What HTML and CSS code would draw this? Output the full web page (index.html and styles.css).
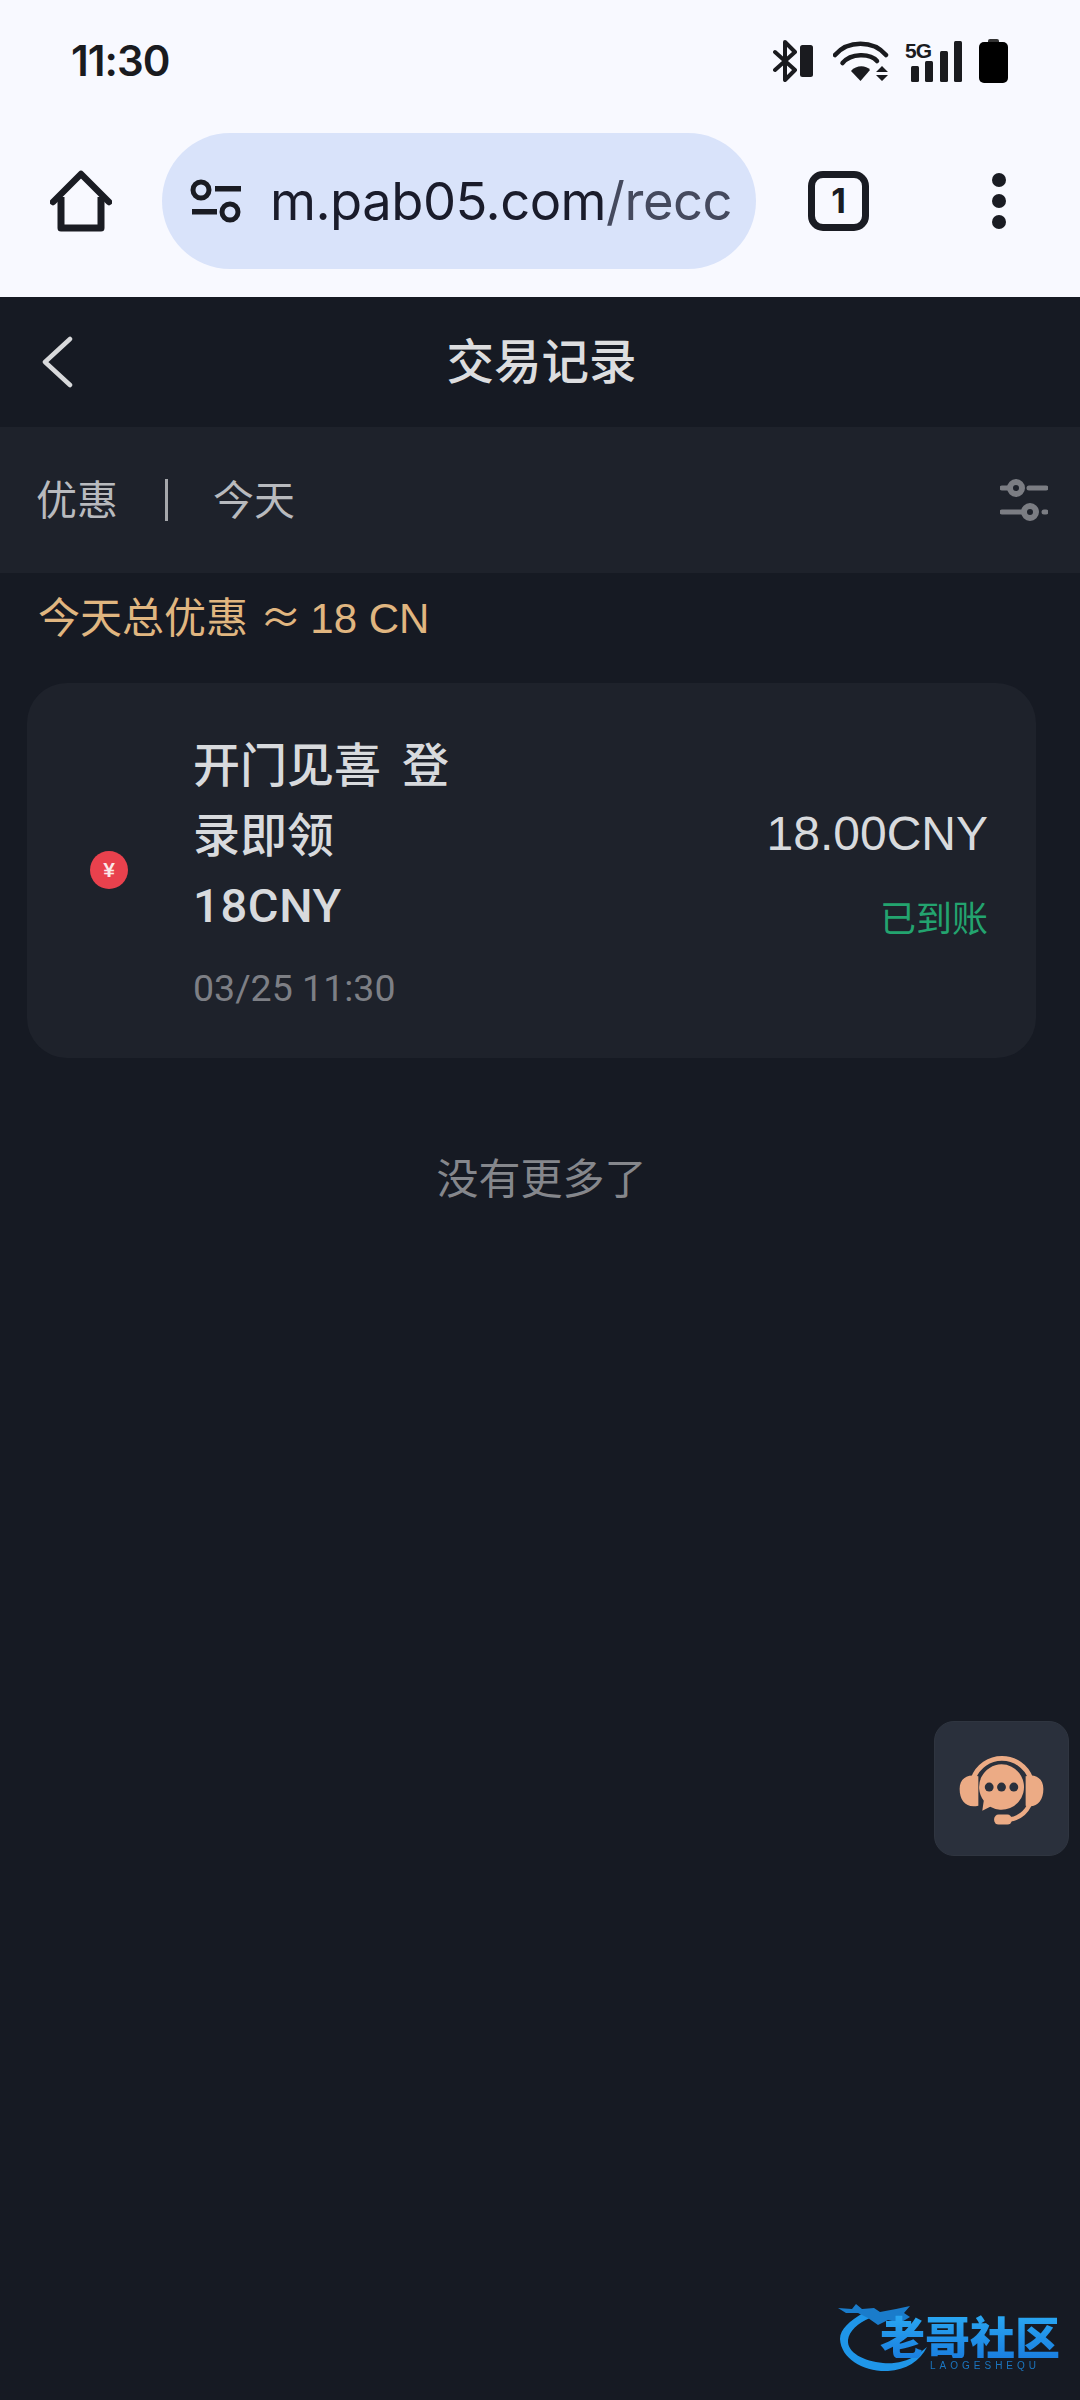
FILE: index.html
```html
<!DOCTYPE html>
<html lang="zh-CN">
<head>
<meta charset="utf-8">
<title>交易记录</title>
<link rel="stylesheet" href="styles.css">
</head>
<body>
<div class="page">
  <header class="chrome">
    <div class="status">
      <span class="time">11:30</span>
      <div class="status-icons">
        <svg class="i-bt" viewBox="0 0 40 42"><path d="M2 12 L22 30 L12 40 V2 L22 12 L2 30" fill="none" stroke="#1a1b1f" stroke-width="4" stroke-linejoin="round" stroke-linecap="round"/><rect x="27" y="5" width="13" height="32" rx="2.5" fill="#1a1b1f"/></svg>
        <svg class="i-wifi" viewBox="0 0 56 42"><g fill="none" stroke="#1a1b1f" stroke-width="4.5" stroke-linecap="round"><path d="M2 15 C15 0 40 0 53 15"/><path d="M9.500 23 C18 13 37 13 44 21"/></g><path d="M18 31 C23 25 33 25 37 30 L27.500 41 Z" fill="#1a1b1f"/><path d="M49 26 L55 32 H43 Z M43 35 H55 L49 41 Z" fill="#1a1b1f"/></svg>
        <svg class="i-sig" viewBox="0 0 58 42"><text class="five-g" x="0" y="18">5G</text><rect x="6" y="26" width="8" height="16" rx="1.500" fill="#1a1b1f"/><rect x="20" y="21" width="8" height="21" rx="1.500" fill="#1a1b1f"/><rect x="35" y="11" width="8" height="31" rx="1.500" fill="#1a1b1f"/><rect x="49" y="1" width="8" height="41" rx="1.500" fill="#1a1b1f"/></svg>
        <svg class="i-bat" viewBox="0 0 29 44"><rect x="9" y="0" width="11" height="5" rx="2" fill="#333"/><rect x="0" y="3" width="29" height="41" rx="5" fill="#000"/></svg>
      </div>
    </div>
    <div class="toolbar">
      <svg class="i-home" viewBox="0 0 62 62"><path d="M3 32 L31 4 L59 32" fill="none" stroke="#1a1c23" stroke-width="6.500" stroke-linecap="round" stroke-linejoin="round"/><path d="M11 27 V58 H51 V27" fill="none" stroke="#1a1c23" stroke-width="7" stroke-linejoin="round"/></svg>
      <div class="pill">
        <svg class="i-site" viewBox="0 0 52 44"><g fill="none" stroke="#1a1c23" stroke-width="5"><circle cx="11" cy="11" r="8"/><circle cx="40" cy="33" r="8"/></g><rect x="25" y="7" width="26" height="5.500" fill="#1a1c23"/><rect x="2" y="30" width="25" height="5.500" fill="#1a1c23"/></svg>
        <span class="url">m.pab05.com<span class="url-path">/recc</span></span>
      </div>
      <div class="tabs">1</div>
      <div class="menu"><i></i><i></i><i></i></div>
    </div>
  </header>

  <main class="app">
    <nav class="nav">
      <svg class="i-back" viewBox="0 0 32 52"><path d="M29 3 L4 26 L29 49" fill="none" stroke="#d8d9db" stroke-width="4.500" stroke-linecap="round" stroke-linejoin="round"/></svg>
      <h1 class="title">交易记录</h1>
    </nav>
    <section class="filter">
      <span class="filter-item">优惠</span>
      <span class="divider"></span>
      <span class="filter-item">今天</span>
      <svg class="i-filter" viewBox="0 0 48 42"><g fill="none" stroke="#7b7d83" stroke-linecap="round"><path d="M2 9 H8" stroke-width="5"/><path d="M29 9 H46" stroke-width="5"/><path d="M2 33 H22" stroke-width="5"/><path d="M44 33 H46" stroke-width="5"/><circle cx="16" cy="9" r="6" stroke-width="6"/><circle cx="30" cy="33" r="6" stroke-width="6"/></g></svg>
    </section>
    <p class="summary">今天总优惠 <span class="approx">≈</span> 18 CN</p>
    <article class="card">
      <span class="coin">¥</span>
      <div class="card-main">
        <h2 class="card-title">开门见喜 登录即领 <span class="title-num">18CNY</span></h2>
        <time class="card-date">03/25 11:30</time>
      </div>
      <div class="card-side">
        <span class="amount">18.00CNY</span>
        <span class="state">已到账</span>
      </div>
    </article>
    <p class="end">没有更多了</p>

    <button class="support" aria-label="客服">
      <svg viewBox="0 0 135 135">
        <path d="M25 68 C25 58 32 52 44 55 L44 85 C32 88 25 80 25 68 Z M110 68 C110 58 103 52 92 55 L92 85 C103 88 110 80 110 68 Z" fill="#ecab85"/>
        <path d="M39 57 A31 31 0 0 1 97 57" fill="none" stroke="#ecab85" stroke-width="5"/>
        <path d="M96 84 C91 94 84 98 75 99" fill="none" stroke="#ecab85" stroke-width="4.500"/>
        <rect x="60" y="94" width="18" height="10" rx="4.500" fill="#ecab85"/>
        <path d="M67.500 43 A23 23 0 1 1 56 86 L48 90 L49.500 80 A23 23 0 0 1 67.500 43 Z" fill="#ecab85"/>
        <g fill="#2a303c"><circle cx="55" cy="66" r="4.500"/><circle cx="67.500" cy="66" r="4.500"/><circle cx="80" cy="66" r="4.500"/></g>
      </svg>
    </button>

    <div class="mark">
      <svg class="mark-dragon" viewBox="0 0 225 70">
        <path d="M25 10 C12 18 2 26 2 36 C3 56 26 69 50 68 C68 67 82 58 89 44 L79 52 C68 59 56 61 45 60 C26 58 9 50 10 37 C11 28 20 20 32 15 Z" fill="#1f96e8"/>
        <path d="M0 5 L14 6 L18 1 L24 6 L36 5 L42 9 L58 6 L72 3 L66 10 L72 14 L62 20 L50 17 L40 22 L30 15 L20 10 L8 10 Z" fill="#1a7ccb"/>
      </svg>
      <span class="mark-cn">老哥社区</span>
      <span class="mark-en">LAOGESHEQU</span>
    </div>
  </main>
</div>
</body>
</html>
```

FILE: styles.css
```css
* { box-sizing: border-box; }
html, body { margin: 0; padding: 0; }
body { width: 1080px; height: 2400px; overflow: hidden; background: #161a23; font-family: "Noto Sans CJK SC", "Liberation Sans", sans-serif; }
.page { display: flex; flex-direction: column; height: 2400px; }
.chrome { background: #f8f9ff; height: 297px; flex: none; }
.status { height: 122px; display: flex; align-items: center; justify-content: space-between; padding: 0 72px 0 71px; }
.time { font: 600 42px/1 Inter, "Liberation Sans", sans-serif; color: #1a1b1f; letter-spacing: -1px; }
.status-icons { display: flex; align-items: center; }
.i-bt { width: 40px; height: 42px; }
.i-wifi { width: 56px; height: 42px; margin-left: 20px; }
.i-sig { width: 58px; height: 42px; margin-left: 16px; }
.i-bat { width: 29px; height: 44px; margin-left: 16px; }
.five-g { font: 700 21px "Liberation Sans", sans-serif; fill: #1a1b1f; letter-spacing: -1px; }
.toolbar { display: flex; align-items: center; padding: 11px 0 0 50px; }
.i-home { width: 62px; height: 62px; flex: none; }
.pill { margin-left: 50px; width: 594px; height: 136px; border-radius: 68px; background: #d9e3fa; display: flex; align-items: center; padding-left: 28px; flex: none; }
.i-site { width: 52px; height: 44px; flex: none; }
.url { margin-left: 28px; font: 400 52.500px/1.2 Inter, Roboto, sans-serif; color: #1a1c2b; white-space: nowrap; letter-spacing: -.5px; }
.url-path { color: #454a5e; }
.tabs { margin-left: 52px; width: 61px; height: 60px; border: 7px solid #1a1c23; border-radius: 15px; display: flex; align-items: center; justify-content: center; font: 700 34px/1 Inter, sans-serif; color: #1a1c23; flex: none; }
.menu { margin-left: 123px; display: flex; flex-direction: column; gap: 7px; }
.menu i { display: block; width: 14px; height: 14px; border-radius: 50%; background: #1a1c23; }
.app { position: relative; flex: 1; background: #161a23; }
.nav { height: 130px; display: flex; align-items: center; justify-content: center; position: relative; padding: 0 0 6px 3px; }
.i-back { position: absolute; left: 41px; top: 39px; width: 32px; height: 52px; }
.title { margin: 0; font-size: 47.500px; font-weight: 500; line-height: 1; color: #dcdddf; }
.filter { height: 146px; background: #1e222b; display: flex; align-items: center; padding: 0 32px 6px 36px; }
.filter-item { font-size: 41px; line-height: 1; color: #b8babe; font-weight: 400; }
.divider { width: 3px; height: 42px; background: #a5a7ab; margin: 6px 45px 0 47px; }
.i-filter { width: 48px; height: 42px; margin: 6px 0 0 auto; }
.summary { margin: 0; padding: 18px 0 0 38px; height: 110px; font: 400 42px/48px "Liberation Sans", "Noto Sans CJK SC", sans-serif; color: #e0b680; white-space: nowrap; }
.approx { font-family: "Noto Sans CJK SC", sans-serif; margin-right: -3px; }
.card { margin: 0 44px 0 27px; height: 375px; border-radius: 40px; background: #1e222b; display: flex; align-items: center; padding: 0 48px 0 63px; }
.coin { width: 38px; height: 38px; margin-top: -2px; border-radius: 50%; background: #e9414d; color: #fbe9e9; display: flex; align-items: center; justify-content: center; font: 700 21px/1 "Liberation Sans", sans-serif; flex: none; }
.card-main { margin-left: 65px; width: 272px; display: flex; flex-direction: column; flex: none; }
.card-title { margin: 0; font: 500 47px/70px "Liberation Sans", "Noto Sans CJK SC", sans-serif; word-spacing: 8px; color: #d8dadd; }
.title-num { font-family: Roboto, sans-serif; letter-spacing: .7px; }
.card-date { margin-top: 25px; font: 400 37.500px/44px Roboto, sans-serif; color: #7d7f85; white-space: nowrap; }
.card-side { margin-left: auto; display: flex; flex-direction: column; align-items: flex-end; gap: 36px; align-self: flex-start; margin-top: 125px; }
.amount { font: 400 48px/52px "Liberation Sans", sans-serif; color: #d8dadd; white-space: nowrap; }
.state { font-size: 36px; line-height: 40px; font-weight: 400; color: #23a46f; }
.end { margin: 93px 0 0; padding-left: 3px; text-align: center; font-size: 42px; line-height: 50px; font-weight: 400; color: #85878c; }
.support { position: absolute; left: 934px; top: 1424px; width: 135px; height: 135px; padding: 0; border: 1px solid #2f3540; border-radius: 20px; background: #2a303c; }
.support svg { display: block; width: 100%; height: 100%; }
.mark { position: absolute; left: 838px; top: 2006px; width: 225px; height: 72px; filter: blur(.7px); }
.mark-dragon { position: absolute; left: 0; top: 0; width: 225px; height: 70px; }
.mark-cn { position: absolute; left: 42px; top: 11px; padding: 2px 0; font-size: 45px; line-height: 40px; font-weight: 900; white-space: nowrap; color: transparent; background: linear-gradient(#2aa8f2, #1a7fe0); -webkit-background-clip: text; background-clip: text; }
.mark-en { position: absolute; left: 92px; top: 58px; font: 400 10px/1 "Liberation Sans", sans-serif; letter-spacing: 4px; color: #1b76c0; white-space: nowrap; }
```
